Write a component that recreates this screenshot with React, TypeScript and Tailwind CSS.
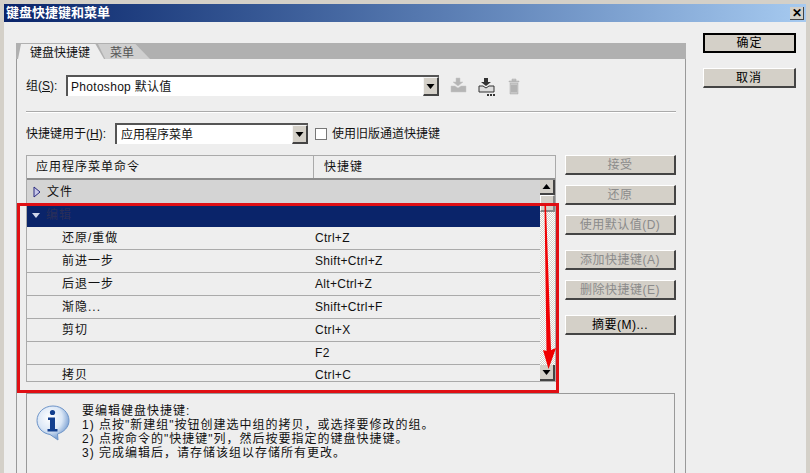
const rows = [
  { name: "还原/重做", key: "Ctrl+Z" },
  { name: "前进一步", key: "Shift+Ctrl+Z" },
  { name: "后退一步", key: "Alt+Ctrl+Z" },
  { name: "渐隐...", key: "Shift+Ctrl+F" },
  { name: "剪切", key: "Ctrl+X" },
  { name: "", key: "F2" },
];

const actions = [
  { label: "接受", off: true, gap: "mt-0" },
  { label: "还原", off: true, gap: "mt-[10px]" },
  { label: "使用默认值(D)", off: true, gap: "mt-[10px]" },
  { label: "添加快捷键(A)", off: true, gap: "mt-[15px]" },
  { label: "删除快捷键(E)", off: true, gap: "mt-[10px]" },
  { label: "摘要(M)...", off: false, gap: "mt-[15px]" },
];

function Arrow({ up }: { up?: boolean }) {
  return (
    <svg width="9" height="5" viewBox="0 0 9 5" className={up ? "rotate-180" : ""}>
      <path d="M0.5 0h8L4.5 5z" fill="#000" />
    </svg>
  );
}

function DropButton() {
  return (
    <div className="flex w-[16px] h-full items-center justify-center bg-[#d4d0c8] border-t border-l border-[#f5f5f5] border-r-2 border-b-2 border-r-[#444] border-b-[#444]">
      <Arrow />
    </div>
  );
}

function InfoIcon() {
  return (
    <svg width="34" height="36" viewBox="0 0 34 36">
      <defs>
        <radialGradient id="bubble" cx="40%" cy="35%" r="70%">
          <stop offset="0%" stopColor="#ffffff" />
          <stop offset="55%" stopColor="#dbe7f6" />
          <stop offset="100%" stopColor="#5f8cc8" />
        </radialGradient>
      </defs>
      <path
        d="M17 1C8 1 1 7.500 1 15.500 1 23 7 28.500 14 29.500L22 35 21.500 29C28 27 33 22 33 15.500 33 7.500 26 1 17 1z"
        fill="url(#bubble)"
        stroke="#6d94c8"
        strokeWidth="1"
      />
      <circle cx="16.500" cy="7.500" r="2.600" fill="#123f8f" />
      <path d="M12 12.500h7v11.500h2.500v2.500h-10V24H14v-9h-2z" fill="#123f8f" />
    </svg>
  );
}

function WinButton({ label, off, gap }: { label: string; off?: boolean; gap?: string }) {
  return (
    <div
      className={`flex h-[20px] w-[111px] items-center justify-center bg-[#d4d0c8] border-t border-l border-white border-r-2 border-b-2 border-r-[#444] border-b-[#444] tracking-[0.5px] ${gap} ${off ? "text-[#8b8b8b]" : "text-black"}`}
    >
      {label}
    </div>
  );
}

export default function App() {
  return (
    <div className="relative flex h-[473px] w-[810px] flex-col overflow-hidden bg-[#d4d0c8] pt-[4px] pl-[4px] pr-[4px] text-[12px] leading-[14px] text-[#111] font-['Liberation_Sans','Noto_Sans_CJK_SC',sans-serif]">
      <div className="flex h-[18px] shrink-0 items-center justify-between bg-gradient-to-r from-[#0a246a] to-[#a6caf0] pl-[2px] pr-[2px]">
        <span className="text-[13px] font-bold text-white">键盘快捷键和菜单</span>
        <div className="flex h-[13px] w-[14px] items-center justify-center bg-[#d4d0c8] border-r border-b border-[#444] text-[12px] font-bold leading-none text-black">
          ✕
        </div>
      </div>

      <div className="flex min-h-0 flex-1 bg-[#eeeeee] pl-[12px]">
        <div className="flex w-[670px] shrink-0 flex-col pt-[21px]">
          <div className="flex h-[16px] shrink-0 items-end bg-[#b0b0b0] pl-[2px]">
            <div className="flex h-[15px] w-[86px] items-center bg-[#eeeeee] pl-[12px] pt-[2px] [clip-path:polygon(3px_0,90%_0,100%_100%,0_100%)]">
              键盘快捷键
            </div>
            <div className="ml-[-6px] flex h-[15px] w-[52px] items-center bg-[#cfcfcf] pl-[12px] pt-[2px] text-[#555] [clip-path:polygon(0_0,72%_0,100%_100%,14%_100%)]">
              菜单
            </div>
          </div>

          <div className="flex min-h-0 flex-1 flex-col border-x border-[#999] pl-[9px] pr-[9px] pt-[16px]">
            <div className="flex h-[21px] shrink-0 items-center">
              <span className="w-[40px]">
                组(<u>S</u>):
              </span>
              <div className="flex h-full w-[373px] items-center justify-between border-t-2 border-l-2 border-[#555] bg-white pl-[3px]">
                <span className="tracking-[0.3px]">Photoshop 默认值</span>
                <DropButton />
              </div>
              <svg width="74" height="20" viewBox="0 0 74 20" className="ml-[11px]" fill="none">
                <path d="M6 2h4v4h3l-5 4-5-4h3z M1 10h4l3 2 3-2h5v6H1z" fill="#b5b5b5" stroke="#c4c4c4" strokeWidth="0.5" />
                <path d="M34 2h4v4h3l-5 4-5-4h3z" fill="#333" />
                <path d="M29 10h4l3 2 3-2h5v6H29z" fill="#ddd" stroke="#333" />
                <path d="M37 18h2v2h-2z M40 18h2v2h-2z M43 18h2v2h-2z" fill="#333" />
                <path d="M59 5h10v1H59z M62 3h4v2h-4z M60 7h8v11h-8z" fill="#c6c6c6" stroke="#aaa" strokeWidth="0.5" />
                <path d="M62 9v7M64 9v7M66 9v7" stroke="#888" strokeWidth="0.6" />
              </svg>
            </div>

            <div className="mt-[15px] h-[2px] shrink-0 border-t border-[#aaa] bg-white" />

            <div className="mt-[10px] flex h-[21px] shrink-0 items-center">
              <span className="w-[89px]">
                快捷键用于(<u>H</u>):
              </span>
              <div className="flex h-full w-[193px] items-center justify-between border-t-2 border-l-2 border-[#555] bg-white pl-[4px]">
                <span>应用程序菜单</span>
                <DropButton />
              </div>
              <div className="ml-[7px] h-[12px] w-[12px] border border-[#777] bg-white" />
              <span className="ml-[5px]">使用旧版通道快捷键</span>
            </div>

            <div className="mt-[11px] flex shrink-0 items-start">
              <div className="flex w-[530px] shrink-0 flex-col border border-[#aaa]">
                <div className="flex h-[24px] items-center border-b-2 border-[#8c8c8c] bg-[#eeeeee] tracking-[1px]">
                  <span className="w-[286px] pl-[9px]">应用程序菜单命令</span>
                  <span className="flex h-full items-center border-l border-[#aaa] pl-[10px]">快捷键</span>
                </div>
                <div className="flex h-[201px]">
                  <div className="flex w-[513px] flex-col">
                    <div className="flex h-[23px] items-center gap-[6px] bg-[#d4d4d4] pl-[6px] tracking-[1px]">
                      <svg width="8" height="12" viewBox="0 0 8 12">
                        <path d="M1 1l6 5-6 5z" fill="#c8c8e8" stroke="#2a2a80" />
                      </svg>
                      文件
                    </div>
                    <div className="flex h-[24px] items-center gap-[6px] bg-[#0a246a] pl-[5px] tracking-[1px] text-[#2a2f58]">
                      <svg width="8" height="5" viewBox="0 0 8 5">
                        <path d="M0 0h8L4 5z" fill="#cfd6ea" />
                      </svg>
                      编辑
                    </div>
                    {rows.map((r) => (
                      <div key={r.key} className="flex h-[23px] items-center border-b border-[#aaa]">
                        <span className="w-[288px] pl-[35px] tracking-[1px]">{r.name}</span>
                        <span className="tracking-[0.3px]">{r.key}</span>
                      </div>
                    ))}
                    <div className="flex h-[16px] items-start overflow-hidden pt-[3px]">
                      <span className="w-[288px] pl-[35px] tracking-[1px]">拷贝</span>
                      <span className="tracking-[0.3px]">Ctrl+C</span>
                    </div>
                  </div>
                  <div className="flex w-[15px] flex-col bg-[repeating-conic-gradient(#d4d0c8_0_25%,#ffffff_0_50%)] bg-[length:2px_2px]">
                    <div className="flex h-[15px] items-center justify-center bg-[#d4d0c8] border-r-2 border-b-2 border-[#444]">
                      <Arrow up />
                    </div>
                    <div className="h-[17px] bg-[#d4d0c8] border-t border-l border-white border-r-2 border-b-2 border-r-[#888] border-b-[#888]" />
                    <div className="flex-1" />
                    <div className="flex h-[16px] items-center justify-center bg-[#d4d0c8] border-r-2 border-b-2 border-[#444]">
                      <Arrow />
                    </div>
                  </div>
                </div>
              </div>

              <div className="ml-[9px] flex flex-col">
                {actions.map((a) => (
                  <WinButton key={a.label} label={a.label} off={a.off} gap={a.gap} />
                ))}
              </div>
            </div>

            <div className="mt-[11px] flex min-h-0 w-[649px] flex-1 border-x border-t border-[#999] pl-[9px] pt-[11px]">
              <InfoIcon />
              <div className="ml-[12px] mt-[-1px] tracking-[1px]">
                <p>要编辑健盘快捷键:</p>
                <p>1) 点按"新建组"按钮创建选中组的拷贝，或选择要修改的组。</p>
                <p>2) 点按命令的"快捷键"列，然后按要指定的键盘快捷键。</p>
                <p>3) 完成编辑后，请存储该组以存储所有更改。</p>
              </div>
            </div>
          </div>
        </div>

        <div className="ml-[17px] flex w-[93px] shrink-0 flex-col pt-[11px]">
          <div className="flex h-[20px] items-center justify-center bg-[#d4d0c8] border-2 border-black tracking-[1px] text-black">
            确定
          </div>
          <div className="mt-[15px] flex h-[20px] items-center justify-center bg-[#d4d0c8] border-t border-l border-white border-r-2 border-b-2 border-r-[#444] border-b-[#444] tracking-[1px] text-black">
            取消
          </div>
        </div>
      </div>

      {/* red annotation drawn over the screenshot */}
      <div className="pointer-events-none absolute left-[17px] top-[203px] h-[190px] w-[542px] border-[3px] border-[#e00f14]" />
      <svg className="pointer-events-none absolute left-0 top-0" width="810" height="473" viewBox="0 0 810 473">
        <path d="M544.500 205L546 205 551 350 556 348 548.500 369 543 350 546.500 351z" fill="#f00000" />
      </svg>
    </div>
  );
}
